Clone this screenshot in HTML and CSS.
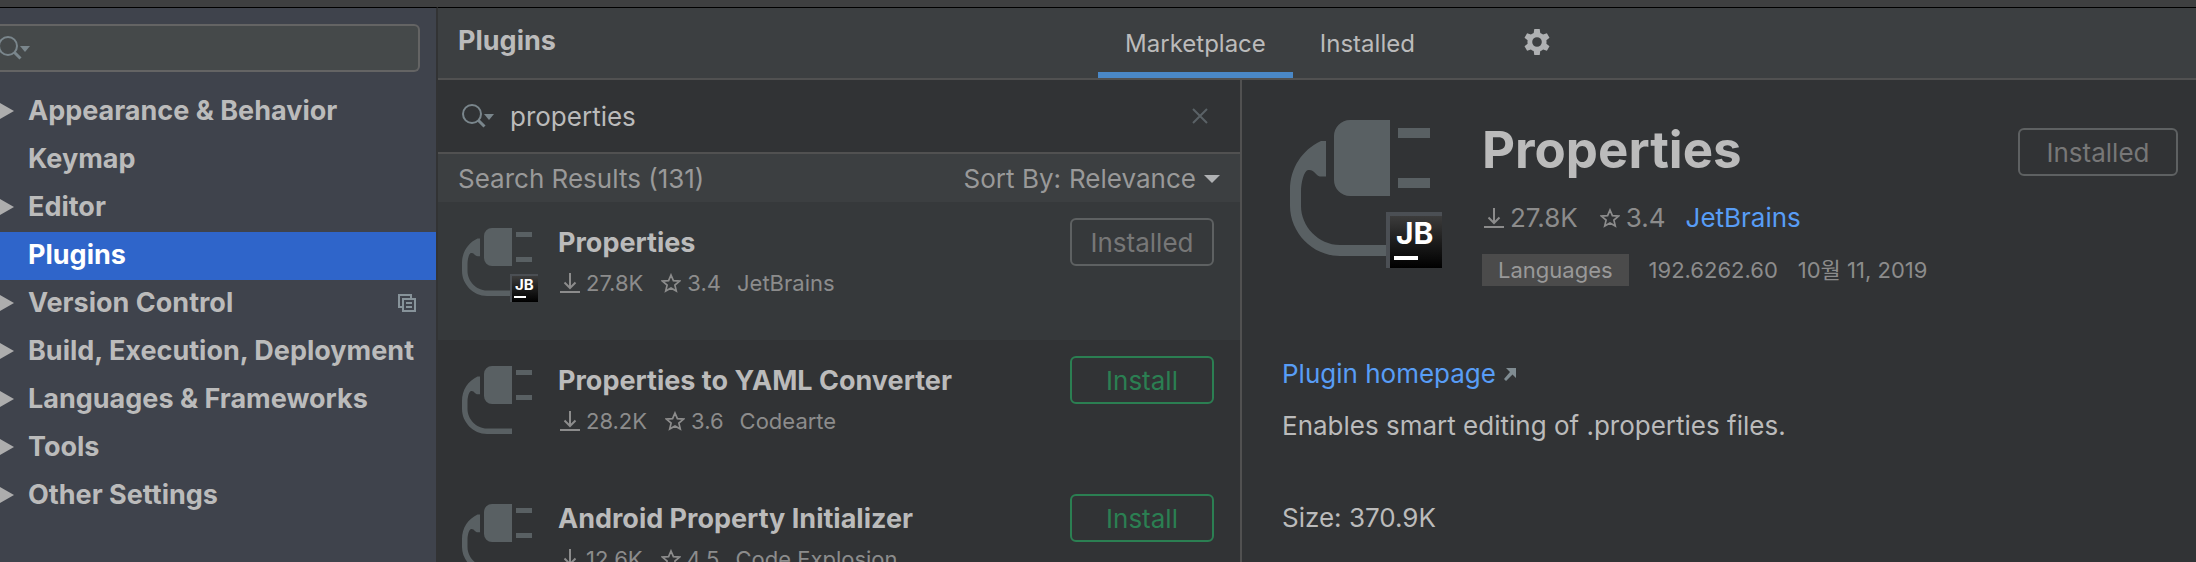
FILE: index.html
```html
<!DOCTYPE html>
<html lang="en">
<head>
<meta charset="UTF-8">
<meta name="viewport" content="width=device-width, initial-scale=1.0">
<title>Plugins</title>
<link rel="stylesheet" href="styles.css">
</head>
<body>
<!-- shared icons -->
<svg class="sprite" width="0" height="0" aria-hidden="true">
    <defs>
        <linearGradient id="jbFill" x1="0" y1="0" x2="0" y2="1">
            <stop offset="0" stop-color="#3c3c3c"/>
            <stop offset="0.5" stop-color="#1c1c1c"/>
            <stop offset="1" stop-color="#000"/>
        </linearGradient>
    </defs>
    <symbol id="plug" viewBox="0 0 76 76">
        <path d="M30 0H50V38H30A8 8 0 0 1 22 30V8A8 8 0 0 1 30 0ZM54 4H70V9H54ZM54 29H70V34H54Z"/>
        <path d="M18 10.5H15.5C6 15 0 24 0 35V43C0 56 11 68 25 68H50V62.5H25C14 62.5 5.5 53 5.5 43V36C5.5 31 7 25.5 9 25C12.5 24.5 12.5 28.3 16 28.3H18Z"/>
    </symbol>
    <symbol id="jb" viewBox="0 0 76 76">
        <rect x="48" y="46" width="28" height="28" fill="#4b4f54"/>
        <rect x="50" y="48" width="26" height="26" fill="url(#jbFill)"/>
        <text class="jb-text" x="53" y="62">JB</text>
        <rect x="52" y="68" width="12" height="2" fill="#fff"/>
    </symbol>
    <symbol id="search" viewBox="0 0 32 24">
        <circle cx="10" cy="10" r="9" fill="none" stroke="currentColor" stroke-width="2"/>
        <path d="M16 16L22.5 22.5" fill="none" stroke="currentColor" stroke-width="3"/>
        <path d="M22 10H32L27 16Z" fill="currentColor"/>
    </symbol>
    <symbol id="download" viewBox="0 0 20 20">
        <path d="M10 0V15M4.5 9.5L10 15L15.5 9.5M0 19H20" fill="none" stroke="currentColor" stroke-width="2"/>
    </symbol>
    <symbol id="star" viewBox="0 0 20 20">
        <path d="M10 2L12.4 7.6L18.5 8.1L13.9 12.1L15.3 18.1L10 14.9L4.7 18.1L6.1 12.1L1.5 8.1L7.6 7.6Z" fill="none" stroke="currentColor" stroke-width="1.7"/>
    </symbol>
    <symbol id="arrow" viewBox="0 0 14 16">
        <path d="M0 0L14 8L0 16Z" fill="currentColor"/>
    </symbol>
</svg>

<div class="window">
    <aside class="sidebar">
        <div class="settings-search">
            <svg class="search-icon" width="32" height="24"><use href="#search"/></svg>
            <input type="text" id="settingsSearch" aria-label="Search settings">
        </div>
        <nav class="tree">
            <a class="tree-row" href="#"><svg class="arrow" width="14" height="16"><use href="#arrow"/></svg>Appearance &amp; Behavior</a>
            <a class="tree-row" href="#"><span class="arrow"></span>Keymap</a>
            <a class="tree-row" href="#"><svg class="arrow" width="14" height="16"><use href="#arrow"/></svg>Editor</a>
            <a class="tree-row selected" href="#"><span class="arrow"></span>Plugins</a>
            <a class="tree-row" href="#"><svg class="arrow" width="14" height="16"><use href="#arrow"/></svg>Version Control
                <svg class="project-icon" width="18" height="18" viewBox="0 0 18 18" fill="none" stroke="currentColor" stroke-width="2">
                    <path d="M4 13H1V1H13V4M5 5H17V17H5ZM8 9H14M8 13H14"/>
                </svg>
            </a>
            <a class="tree-row" href="#"><svg class="arrow" width="14" height="16"><use href="#arrow"/></svg>Build, Execution, Deployment</a>
            <a class="tree-row" href="#"><svg class="arrow" width="14" height="16"><use href="#arrow"/></svg>Languages &amp; Frameworks</a>
            <a class="tree-row" href="#"><svg class="arrow" width="14" height="16"><use href="#arrow"/></svg>Tools</a>
            <a class="tree-row" href="#"><svg class="arrow" width="14" height="16"><use href="#arrow"/></svg>Other Settings</a>
        </nav>
    </aside>

    <main class="content">
        <header class="header">
            <h1>Plugins</h1>
            <div class="tabs">
                <button type="button" class="tab active">Marketplace</button>
                <button type="button" class="tab">Installed</button>
                <button type="button" class="gear" aria-label="Plugin settings">
                    <svg width="26" height="26" viewBox="0 0 26 26">
                        <path fill="currentColor" fill-rule="evenodd" d="M10.3 0H15.7L16.3 4A9.5 9.5 0 0 1 19.1 5.6L22.9 4.2L25.5 8.8L22.4 11.3A9.5 9.5 0 0 1 22.4 14.7L25.5 17.2L22.9 21.8L19.1 20.4A9.5 9.5 0 0 1 16.3 22L15.7 26H10.3L9.7 22A9.5 9.5 0 0 1 6.9 20.4L3.1 21.8L0.5 17.2L3.6 14.7A9.5 9.5 0 0 1 3.6 11.3L0.5 8.8L3.1 4.2L6.9 5.6A9.5 9.5 0 0 1 9.7 4ZM13 8.2A4.8 4.8 0 1 0 13 17.8A4.8 4.8 0 1 0 13 8.2Z"/>
                    </svg>
                </button>
            </div>
        </header>

        <div class="panes">
            <section class="results">
                <div class="plugin-search">
                    <svg class="search-icon" width="32" height="24"><use href="#search"/></svg>
                    <input type="text" id="pluginSearch" value="properties" aria-label="Search plugins">
                    <button type="button" class="clear" aria-label="Clear search">
                        <svg width="16" height="16" viewBox="0 0 16 16"><path d="M1 1L15 15M15 1L1 15" stroke="currentColor" stroke-width="2"/></svg>
                    </button>
                </div>
                <div class="sort-bar">
                    <span>Search Results (131)</span>
                    <div class="sort">
                        <label for="sortBy">Sort By:</label>
                        <select id="sortBy"><option>Relevance</option></select>
                        <svg class="sort-arrow" width="16" height="8" viewBox="0 0 16 8"><path d="M0 0H16L8 8Z" fill="currentColor"/></svg>
                    </div>
                </div>

                <article class="plugin current">
                    <svg class="plugin-icon" width="76" height="76"><use href="#plug"/><use href="#jb"/></svg>
                    <div class="plugin-info">
                        <h2>Properties</h2>
                        <div class="meta">
                            <span class="stat"><svg width="20" height="20"><use href="#download"/></svg>27.8K</span>
                            <span class="stat"><svg width="20" height="20"><use href="#star"/></svg>3.4</span>
                            <span>JetBrains</span>
                        </div>
                    </div>
                    <button type="button" class="btn" disabled>Installed</button>
                </article>
                <article class="plugin">
                    <svg class="plugin-icon" width="76" height="76"><use href="#plug"/></svg>
                    <div class="plugin-info">
                        <h2>Properties to YAML Converter</h2>
                        <div class="meta">
                            <span class="stat"><svg width="20" height="20"><use href="#download"/></svg>28.2K</span>
                            <span class="stat"><svg width="20" height="20"><use href="#star"/></svg>3.6</span>
                            <span>Codearte</span>
                        </div>
                    </div>
                    <button type="button" class="btn install">Install</button>
                </article>
                <article class="plugin">
                    <svg class="plugin-icon" width="76" height="76"><use href="#plug"/></svg>
                    <div class="plugin-info">
                        <h2>Android Property Initializer</h2>
                        <div class="meta">
                            <span class="stat"><svg width="20" height="20"><use href="#download"/></svg>12.6K</span>
                            <span class="stat"><svg width="20" height="20"><use href="#star"/></svg>4.5</span>
                            <span>Code Explosion</span>
                        </div>
                    </div>
                    <button type="button" class="btn install">Install</button>
                </article>
            </section>

            <section class="details">
                <div class="details-head">
                    <svg class="details-icon" width="152" height="152"><use href="#plug"/><use href="#jb"/></svg>
                    <div class="details-info">
                        <h2>Properties</h2>
                        <div class="meta meta-large">
                            <span class="stat"><svg width="20" height="20"><use href="#download"/></svg>27.8K</span>
                            <span class="stat"><svg width="20" height="20"><use href="#star"/></svg>3.4</span>
                            <a href="#">JetBrains</a>
                        </div>
                        <div class="version">
                            <span class="tag">Languages</span>
                            <span>192.6262.60</span>
                            <span lang="ko">10월 11, 2019</span>
                        </div>
                    </div>
                    <button type="button" class="btn btn-wide" disabled>Installed</button>
                </div>
                <div class="description">
                    <a href="#">Plugin homepage
                        <svg width="12" height="13" viewBox="0 0 12 13"><path d="M2 0H12V10L8.5 6.5L2 13L0 11L6 4Z" fill="#7f8b91"/></svg>
                    </a>
                    <p>Enables smart editing of .properties files.</p>
                    <p class="size">Size: 370.9K</p>
                </div>
            </section>
        </div>
    </main>
</div>
</body>
</html>
```

FILE: styles.css
```css
* {
    box-sizing: border-box;
}

body {
    margin: 0;
    height: 100vh;
    overflow: hidden;
    background-color: #313335;
    color: #bbb;
    font-family: Inter, "Noto Sans CJK KR", sans-serif;
    font-size: 26px;
    line-height: 32px;
}

h1, h2, p {
    margin: 0;
}

h1, h2 {
    font-size: 27px;
}

a {
    color: #589df6;
    text-decoration: none;
}

button, input, select {
    margin: 0;
    padding: 0;
    border: none;
    background: none;
    color: inherit;
    font: inherit;
    outline: none;
}

svg {
    display: block;
    flex-shrink: 0;
}

.sprite {
    position: absolute;
}

.jb-text {
    fill: #fff;
    font-size: 15px;
    font-weight: bold;
}

.window {
    display: flex;
    height: 100%;
    border-top: 7px solid #3e3f40;
}

/* sidebar */
.sidebar {
    flex: 0 0 438px;
    min-width: 0;
    padding-top: 16px;
    background-color: #3f434c;
    border-top: 1px solid #000;
    border-right: 2px solid #323334;
}

.settings-search {
    display: flex;
    align-items: center;
    height: 48px;
    margin-right: 16px;
    background-color: #45494a;
    border: 2px solid #646464;
    border-left: none;
    border-radius: 0 6px 6px 0;
}

.settings-search .search-icon {
    margin-left: -2px;
}

.settings-search input {
    flex: 1;
    min-width: 0;
    padding-left: 12px;
}

.search-icon {
    color: #7a868c;
}

.tree {
    margin-top: 16px;
}

.tree-row {
    display: flex;
    align-items: center;
    height: 48px;
    padding: 0 20px 2px 0;
    color: #bbb;
    font-size: 27px;
    font-weight: bold;
    white-space: nowrap;
}

.tree-row.selected {
    background-color: #2f65ca;
    color: #fff;
}

.arrow {
    width: 14px;
    margin-right: 14px;
    color: #adadad;
}

.project-icon {
    margin-left: auto;
    color: #87939a;
}

/* header */
.content {
    display: flex;
    flex: 1;
    flex-direction: column;
    min-width: 0;
    border-top: 1px solid #000;
}

.header {
    display: grid;
    grid-template-columns: 1fr auto 1fr;
    flex: 0 0 72px;
    padding-left: 20px;
    background-color: #3c3f41;
    border-bottom: 2px solid #515151;
}

.header h1 {
    padding-top: 17px;
}

.tabs {
    display: flex;
}

.tab {
    padding: 8px 27px 0;
    border-bottom: 6px solid transparent;
    font-size: 24px;
}

.tab.active {
    border-bottom-color: #4a88c7;
}

.gear {
    align-self: flex-start;
    margin-left: 76px;
    padding: 21px 6px;
    color: #afb1b3;
}

.panes {
    display: grid;
    grid-template-columns: minmax(0, 402fr) minmax(0, 477fr);
    flex: 1;
    min-height: 0;
}

/* results list */
.results {
    overflow: hidden;
    border-right: 2px solid #515151;
}

.plugin-search {
    display: flex;
    align-items: center;
    height: 74px;
    padding: 0 32px 0 24px;
    border-bottom: 2px solid #515151;
}

.plugin-search input {
    flex: 1;
    min-width: 0;
    padding: 2px 0 0 16px;
}

.clear {
    color: #5a6266;
}

.sort-bar {
    display: flex;
    align-items: center;
    justify-content: space-between;
    height: 48px;
    padding: 2px 20px 0;
    background-color: #3c3f41;
    color: #999;
}

.sort {
    display: flex;
    align-items: center;
    gap: 8px;
}

.sort select {
    appearance: none;
}

.sort-arrow {
    color: #afb1b3;
}

.plugin {
    display: flex;
    align-items: flex-start;
    height: 138px;
    padding: 16px 26px 0 24px;
}

.plugin.current {
    background-color: #36393b;
}

.plugin-icon {
    margin-top: 10px;
    fill: #596063;
}

.plugin-info {
    flex: 1;
    min-width: 0;
    margin: 9px 0 0 20px;
    white-space: nowrap;
}

.meta {
    display: flex;
    gap: 16px;
    margin-top: 8px;
    color: #8c8c8c;
    font-size: 22px;
}

.stat {
    display: flex;
    align-items: center;
    gap: 6px;
}

.stat svg {
    margin-left: 2px;
}

.btn {
    width: 144px;
    height: 48px;
    padding-top: 2px;
    border: 2px solid #5e6162;
    border-radius: 6px;
    color: #777;
}

.btn.install {
    border-color: #2b7f52;
    color: #2b7f52;
}

.btn-wide {
    width: 160px;
}

/* plugin details */
.details {
    min-width: 0;
    padding: 40px 18px 0 40px;
}

.details-head {
    display: flex;
    align-items: flex-start;
    padding-left: 8px;
}

.details-icon {
    fill: #596063;
}

.details-info {
    flex: 1;
    min-width: 0;
    margin-left: 40px;
}

.details-info h2 {
    font-size: 51px;
    line-height: 60px;
}

.meta-large {
    gap: 20px;
    margin-top: 22px;
    font-size: 26px;
}

.version {
    display: flex;
    gap: 20px;
    margin-top: 20px;
    color: #8c8c8c;
    font-size: 22px;
}

.tag {
    padding: 0 16px;
    background-color: #4b4b4b;
    color: #999;
}

.details-head .btn {
    margin-top: 8px;
}

.description {
    margin-top: 72px;
}

.description a {
    display: flex;
    align-items: center;
    gap: 8px;
}

.description p {
    margin-top: 20px;
}

.description .size {
    margin-top: 60px;
}
```
